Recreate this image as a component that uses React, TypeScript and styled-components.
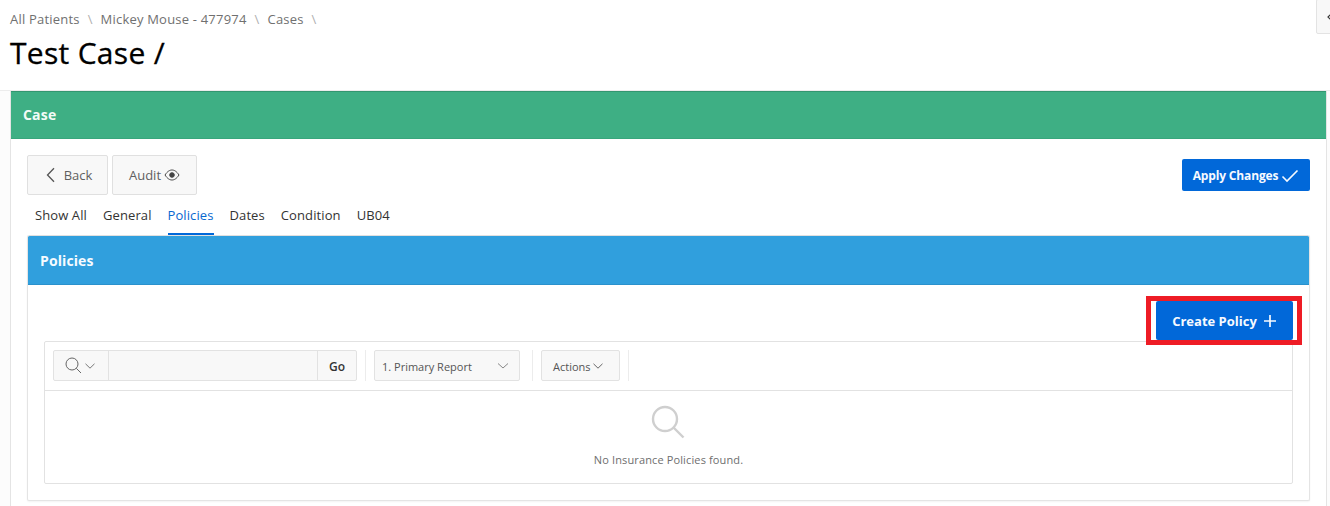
import React from "react";
import styled, { createGlobalStyle } from "styled-components";

const Global = createGlobalStyle`
  html, body { margin: 0; padding: 0; background: #fff; overflow: hidden; }
  body { font-family: "Open Sans", "Liberation Sans", sans-serif; color: #262626; }
  * { box-sizing: border-box; }
`;
const Page = styled.div`
  position: relative; width: 1330px; height: 506px; overflow: hidden; background: #fff;
  display: flex; flex-direction: column;
`;
const Header = styled.header`
  height: 91px; padding: 11px 10px 0; flex: none; border-bottom: 1px solid #ececec;
`;
const Crumbs = styled.nav`
  display: flex; height: 16px; align-items: center; font-size: 13px; letter-spacing: 0.2px; line-height: 16px; color: #707070;
`;
const Sep = styled.span`
  margin: 0 8px 0 8px; color: #b0b0b0;
`;
const Title = styled.h1`
  margin: 7px 0 0; font-size: 30px; line-height: 38px; font-weight: 400; color: #000; letter-spacing: 0.3px;
  -webkit-text-stroke: 0.3px #000;
`;
const Collapse = styled.button`
  position: absolute; top: -1px; left: 1316px; width: 20px; height: 35px; padding: 0 0 0 10px;
  background: #f8f8f8; border: 1px solid #e3e3e3; border-radius: 2px; display: flex; align-items: center;
  color: #333; margin-top: 0;
`;
const Body = styled.main`
  flex: 1; background: #fcfcfc; padding: 0 3px 0 10px; display: flex;
`;
const Region = styled.section`
  flex: 1; background: #fff; border-left: 1px solid #e4e4e4; border-right: 1px solid #e4e4e4; display: flex; flex-direction: column;
`;
const RegionHead = styled.div`
  height: 48px; flex: none; background: #3eaf84; border-top: 1px solid #339670; border-bottom: 1px solid #38a67c;
  display: flex; align-items: center; padding: 0 12px; color: #f2fbf7; font-size: 14px; letter-spacing: 0.2px; font-weight: 700; line-height: 20px;
`;
const RegionBody = styled.div`
  padding: 16px 16px 0; display: flex; flex-direction: column;
`;
const Bar = styled.div`
  display: flex; align-items: center; gap: 4px; height: 40px;
`;
const GhostButton = styled.button<{ $w: number }>`
  width: ${(p) => p.$w}px; height: 40px; padding: 0; background: #f8f8f8; border: 1px solid #e0e0e0; border-radius: 2px;
  display: flex; align-items: center; justify-content: center; gap: 3px;
  font: 400 13px/16px "Open Sans", sans-serif; color: #5f5f5f;
`;
const Spring = styled.div` flex: 1; `;
const PrimaryButton = styled.button<{ $w: number; $h: number; $size: number; $track: number; $gap: number }>`
  width: ${(p) => p.$w}px; height: ${(p) => p.$h}px; padding: 1px 0 0; background: #0168d9; border: 0; border-radius: 2px; flex: none;
  display: flex; align-items: center; justify-content: center; gap: ${(p) => p.$gap}px; color: #f6faff;
  font: 700 ${(p) => p.$size}px/16px "Open Sans", sans-serif; letter-spacing: ${(p) => p.$track}px;
`;
const Tabs = styled.div`
  display: flex; gap: 16px; height: 40px; padding: 12px 8px 0;
`;
const Tab = styled.div<{ $on?: boolean }>`
  height: 28px; font-size: 13px; letter-spacing: 0.1px; line-height: 16px; padding-top: 0; color: ${(p) => (p.$on ? "#0868d0" : "#333")};
  border-bottom: 2px solid ${(p) => (p.$on ? "#0168d9" : "transparent")};
`;
const Panel = styled.section`
  height: 266px; background: #fff; border: 1px solid #e4e4e4; border-top: 0; border-radius: 2px; box-shadow: 0 1px 2px rgba(0,0,0,.05);
`;
const PanelHead = styled.div`
  height: 50px; background: #309fdd; border-bottom: 1px solid #2a91cc; border-top: 1px solid #e0e0e0; border-radius: 2px 2px 0 0;
  display: flex; align-items: center; padding: 1px 12px 0; color: #f6fbff; font-size: 14px; letter-spacing: 0.1px; font-weight: 700;
`;
const PanelBody = styled.div`
  padding: 16px 16px 0; display: flex; flex-direction: column;
`;
const ActionRow = styled.div`
  display: flex; justify-content: flex-end; height: 39px; margin-bottom: 1px; position: relative;
`;
const Highlight = styled.div`
  position: absolute; top: -5px; right: -9px; width: 156px; height: 49px; border: 5px solid #ee1c25; pointer-events: none;
`;
const Report = styled.div`
  height: 143px; border: 1px solid #e2e2e2; border-radius: 2px; display: flex; flex-direction: column;
`;
const Toolbar = styled.div`
  height: 49px; flex: none; border-bottom: 1px solid #e2e2e2; padding: 8px; display: flex; align-items: stretch;
`;
const SearchGroup = styled.div`
  width: 304px; height: 31px; display: flex; background: #f8f8f8; border: 1px solid #e2e2e2; border-radius: 2px;
`;
const SearchMenu = styled.div`
  width: 55px; display: flex; align-items: center; gap: 3px; border-right: 1px solid #e2e2e2; color: #666; padding-left: 11px;
`;
const SearchInput = styled.div` flex: 1; `;
const Go = styled.div`
  width: 39px; border-left: 1px solid #e2e2e2; display: flex; align-items: center; justify-content: center;
  font-size: 12px; font-weight: 600; color: #333; padding-top: 1px;
`;
const Divider = styled.div<{ $left: number }>`
  width: 1px; height: 31px; background: #ececec; margin: 0 8px 0 ${(p) => p.$left}px; flex: none;
`;
const Select = styled.div<{ $w: number }>`
  width: ${(p) => p.$w}px; height: 31px; background: #f8f8f8; border: 1px solid #e2e2e2; border-radius: 2px; display: flex; align-items: center;
  font-size: 11px; padding-top: 1px; color: #555; flex: none;
`;
const SelectLabel = styled.span` flex: 1; padding-left: 7px; `;
const ActionsLabel = styled.span` padding-left: 11px; margin-right: 2px; `;
const Empty = styled.div`
  flex: 1; display: flex; flex-direction: column; align-items: center; padding-top: 14px; padding-right: 2px;
`;
const EmptyText = styled.div`
  margin-top: 13px; margin-left: 2px; font-size: 11px; letter-spacing: 0.13px; line-height: 15px; color: #6e6e6e;
`;

const Chevron = ({ size = 10, color = "currentColor" }: { size?: number; color?: string }) => (
  <svg width={size} height={size} viewBox="0 0 10 10" fill="none" stroke={color} strokeWidth={1}>
    <path d="M0.5 2.8 L5 7.2 L9.5 2.8" />
  </svg>
);

export default function App() {
  return (
    <Page>
      <Global />
      <Header>
        <Crumbs>
          <span>All Patients</span><Sep>\</Sep>
          <span>Mickey Mouse - 477974</span><Sep>\</Sep>
          <span>Cases</span><Sep>\</Sep>
        </Crumbs>
        <Title>Test Case /</Title>
      </Header>
      <Collapse aria-label="Collapse">
        <svg width="5" height="8" viewBox="0 0 5 8" fill="none" stroke="#333" strokeWidth="1.2"><path d="M4.5 0.5 L1 4 L4.5 7.5" /></svg>
      </Collapse>
      <Body>
        <Region>
          <RegionHead>Case</RegionHead>
          <RegionBody>
            <Bar>
              <GhostButton $w={81}>
                <svg width="18" height="16" viewBox="0 0 18 16" fill="none" stroke="#555" strokeWidth="1.3"><path d="M11 1.2 L4.5 8 L11 14.8" /></svg>
                <span>Back</span>
              </GhostButton>
              <GhostButton $w={85}>
                <span>Audit</span>
                <svg width="16" height="12" viewBox="0 0 16 12" fill="none" stroke="#444" strokeWidth="1"><path d="M1 6 C3.5 2.2 5.8 1 8 1 C10.2 1 12.5 2.2 15 6 C12.5 9.8 10.2 11 8 11 C5.8 11 3.5 9.8 1 6 Z" /><circle cx="8" cy="6" r="2.3" fill="#444" /></svg>
              </GhostButton>
              <Spring />
              <PrimaryButton $w={128} $h={32} $size={12} $track={-0.15} $gap={3}>
                <span>Apply Changes</span>
                <svg width="18" height="14" viewBox="0 0 18 14" fill="none" stroke="#f6faff" strokeWidth="1.6"><path d="M1.5 7.5 L6 12 L16.5 1.5" /></svg>
              </PrimaryButton>
            </Bar>
            <Tabs>
              <Tab>Show All</Tab>
              <Tab>General</Tab>
              <Tab $on>Policies</Tab>
              <Tab>Dates</Tab>
              <Tab>Condition</Tab>
              <Tab>UB04</Tab>
            </Tabs>
            <Panel>
              <PanelHead>Policies</PanelHead>
              <PanelBody>
                <ActionRow>
                  <PrimaryButton $w={137} $h={39} $size={13} $track={0} $gap={6}>
                    <span>Create Policy</span>
                    <svg width="14" height="14" viewBox="0 0 14 14" fill="none" stroke="#f6faff" strokeWidth="1.7"><path d="M7 1 V13 M1 7 H13" /></svg>
                  </PrimaryButton>
                  <Highlight />
                </ActionRow>
                <Report>
                  <Toolbar>
                    <SearchGroup>
                      <SearchMenu>
                        <svg width="17" height="17" viewBox="0 0 17 17" fill="none" stroke="#666" strokeWidth="1"><circle cx="7" cy="7" r="6" /><path d="M11.3 11.3 L16 16" /></svg>
                        <Chevron size={10} color="#777" />
                      </SearchMenu>
                      <SearchInput />
                      <Go>Go</Go>
                    </SearchGroup>
                    <Divider $left={8} />
                    <Select $w={146}>
                      <SelectLabel>1. Primary Report</SelectLabel>
                      <svg width="34" height="10" viewBox="0 0 34 10" fill="none" stroke="#888" strokeWidth="1"><path d="M13 2.5 L18 7 L23 2.5" /></svg>
                    </Select>
                    <Divider $left={12} />
                    <Select $w={79}>
                      <ActionsLabel>Actions</ActionsLabel>
                      <Chevron size={10} color="#666" />
                    </Select>
                    <Divider $left={8} />
                  </Toolbar>
                  <Empty>
                    <svg width="34" height="34" viewBox="0 0 34 34" fill="none" stroke="#cfcfcf" strokeWidth="2.4"><circle cx="14" cy="14" r="12" /><path d="M22.5 22.5 L32.5 32.5" /></svg>
                    <EmptyText>No Insurance Policies found.</EmptyText>
                  </Empty>
                </Report>
              </PanelBody>
            </Panel>
          </RegionBody>
        </Region>
      </Body>
    </Page>
  );
}
